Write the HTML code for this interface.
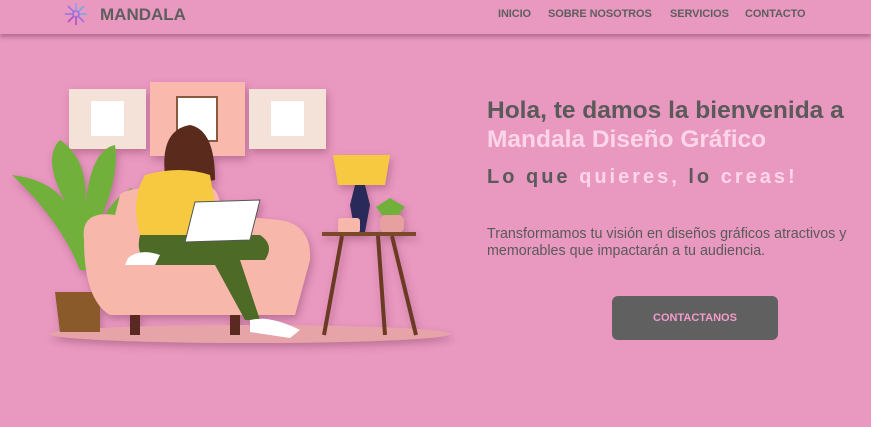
<!DOCTYPE html>
<html><head><meta charset="utf-8"><style>
*{margin:0;padding:0;box-sizing:border-box}
body{width:871px;height:427px;background:#e998c0;font-family:"Liberation Sans",sans-serif;overflow:hidden;position:relative}
.nav{position:absolute;left:0;top:0;width:871px;height:34px;background:#e998c0;box-shadow:0 3px 4px rgba(120,50,80,.45)}
.logo{position:absolute;left:100px;top:5px;font-size:17px;font-weight:bold;color:#5e5e5e}
.nav a{position:absolute;top:8px;font-size:11px;font-weight:bold;color:#5e5e5e;text-decoration:none;letter-spacing:-.1px}
h1{position:absolute;left:487px;top:96px;font-size:24.5px;line-height:29px;color:#5a5a5a;font-weight:bold}
h1 span{color:#fcd6e8}
h2{position:absolute;left:487px;top:166px;font-size:20px;letter-spacing:3px;color:#5a5a5a;font-weight:bold}
h2 span{color:#fcd6e8}
p{position:absolute;left:487px;top:226px;font-size:14.3px;line-height:17px;color:#5a5a5a;width:385px}
.btn{position:absolute;left:612px;top:296px;width:166px;height:44px;background:#606060;border-radius:6px;color:#f39ccb;font-size:11px;font-weight:bold;text-align:center;line-height:44px}
</style></head><body>
<div class="nav">
<svg style="position:absolute;left:64px;top:2px" width="24" height="24" viewBox="-12 -12 24 24">
<g fill="none" stroke-width="1.6">
<g stroke="#7aa7e8"><line x1="0" y1="-3" x2="0" y2="-11"/><line x1="3" y1="0" x2="11" y2="0"/><line x1="2" y1="-2" x2="8" y2="-8"/></g>
<g stroke="#a070e0"><line x1="-3" y1="0" x2="-11" y2="0"/><line x1="-2" y1="-2" x2="-8" y2="-8"/><line x1="2" y1="2" x2="8" y2="8"/></g>
<g stroke="#b050c8"><line x1="0" y1="3" x2="0" y2="11"/><line x1="-2" y1="2" x2="-8" y2="8"/></g>
<circle r="3" stroke="#9a70e0"/></g></svg>
<div class="logo">MANDALA</div>
<a style="left:498px">INICIO</a><a style="left:548px">SOBRE NOSOTROS</a><a style="left:670px">SERVICIOS</a><a style="left:745px">CONTACTO</a>
</div>
<svg style="position:absolute;left:0;top:70px" width="460" height="290" viewBox="0 0 460 290">
<defs><filter id="s"><feDropShadow dx="2" dy="4" stdDeviation="4" flood-color="#7a3a5a" flood-opacity=".4"/></filter></defs>
<g filter="url(#s)">
<ellipse cx="250" cy="264" rx="200" ry="9" fill="#e6a4a8"/>
<rect x="69" y="19" width="77" height="60" fill="#f4e2d8"/><rect x="91" y="31" width="33" height="35" fill="#fff"/>
<rect x="150" y="12" width="95" height="74" fill="#f9b9ad"/><rect x="177" y="27" width="40" height="44" fill="#fff" stroke="#8a5a40" stroke-width="2"/>
<rect x="249" y="19" width="77" height="60" fill="#f4e2d8"/><rect x="271" y="31" width="33" height="35" fill="#fff"/>
<path d="M80 200 Q60 150 12 105 Q55 110 70 140 Q40 90 60 70 Q90 90 85 140 Q90 80 115 75 Q120 110 95 160 Q115 125 132 118 Q125 160 95 200Z" fill="#6fb03a"/>
<path d="M55 222 H100 V262 H60 Z" fill="#8b5a2b"/>
<rect x="130" y="240" width="10" height="25" fill="#5a2a22"/><rect x="230" y="240" width="10" height="25" fill="#5a2a22"/>
<path d="M84 170 Q80 140 115 145 L120 125 Q125 115 210 117 Q220 120 222 145 L280 150 Q312 155 310 190 L295 245 H110 Q84 230 84 170 Z" fill="#f7b7ab"/>
<path d="M190 55 Q160 60 165 105 Q185 115 215 110 Q215 60 190 55Z" fill="#5a2a1e"/>
<path d="M145 105 Q180 95 210 105 L220 165 H140 Q130 130 145 105Z" fill="#f7c93f"/>
<path d="M140 165 L260 165 Q275 175 265 190 L240 190 L260 250 H245 L215 195 H150 Q135 185 140 165Z" fill="#4e6b25"/>
<path d="M250 250 Q270 245 300 260 L290 268 L250 262Z" fill="#fff"/>
<path d="M128 188 Q140 178 160 185 L155 195 H125Z" fill="#fff"/>
<path d="M195 132 L260 130 L250 170 L185 172 Z" fill="#fff" stroke="#555"/>
<path d="M333 85 H390 L385 115 H338 Z" fill="#f7c93f"/>
<path d="M355 115 H365 L370 135 L365 162 H355 L350 135 Z" fill="#2a2a5a"/>
<rect x="338" y="148" width="22" height="15" rx="3" fill="#f7b7ab"/>
<path d="M376 137 L390 128 L405 137 L398 145 H382Z" fill="#6fb03a"/><rect x="380" y="145" width="24" height="18" rx="6" fill="#e6a0a0"/>
<rect x="322" y="162" width="94" height="4" fill="#7a4a2a"/>
<path d="M342 166 L324 265 M378 166 L385 265 M392 166 L416 265" stroke="#6a3a22" stroke-width="4"/>
</g></svg>
<h1>Hola, te damos la bienvenida a<br><span>Mandala Diseño Gráfico</span></h1>
<h2>Lo que <span>quieres,</span> lo <span>creas!</span></h2>
<p>Transformamos tu visión en diseños gráficos atractivos y memorables que impactarán a tu audiencia.</p>
<div class="btn">CONTACTANOS</div>
</body></html>
